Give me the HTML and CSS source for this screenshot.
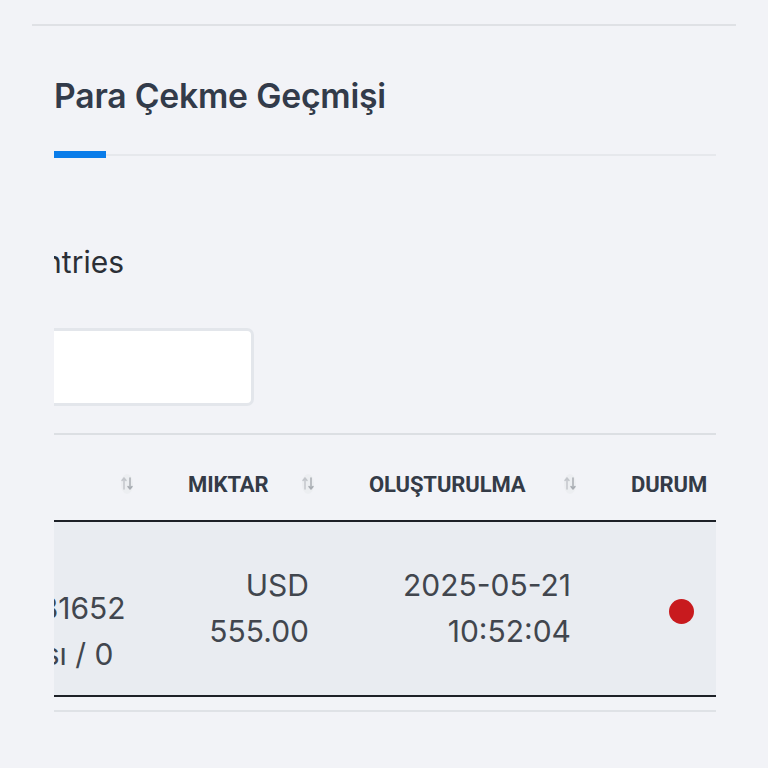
FILE: index.html
```html
<!DOCTYPE html>
<html lang="tr">
<head>
<meta charset="utf-8">
<title>Para Çekme Geçmişi</title>
<link rel="stylesheet" href="styles.css">
</head>
<body>
<div class="page">
  <div class="top-rule"></div>
  <section class="card">
    <h2 class="title">Para Çekme Geçmişi</h2>
    <div class="tabbar"><span class="tab-active"></span><span class="tab-line"></span></div>
    <div class="scroller">
      <div class="inner">
        <div class="length"><span>Show 10 entries</span></div>
        <div class="search"><input type="search" class="search-input" aria-label="Ara"></div>
        <div class="table-wrap">
          <table class="grid">
            <colgroup>
              <col class="c1"><col class="c2"><col class="c3"><col class="c4">
            </colgroup>
            <thead>
              <tr>
                <th><div class="th-in"><span>HESAP</span><svg class="sort" viewBox="0 0 16 22" width="16" height="22"><ellipse class="glow" cx="8" cy="11" rx="6" ry="10"/><path class="up" d="M5 16V5M3 7.5L5 5l2 2.5"/><path class="down" d="M11 5v11M9 13.5l2 2.5 2-2.5"/></svg></div></th>
                <th><div class="th-in"><span>MIKTAR</span><svg class="sort" viewBox="0 0 16 22" width="16" height="22"><ellipse class="glow" cx="8" cy="11" rx="6" ry="10"/><path class="up" d="M5 16V5M3 7.5L5 5l2 2.5"/><path class="down" d="M11 5v11M9 13.5l2 2.5 2-2.5"/></svg></div></th>
                <th><div class="th-in"><span>OLUŞTURULMA</span><svg class="sort" viewBox="0 0 16 22" width="16" height="22"><ellipse class="glow" cx="8" cy="11" rx="6" ry="10"/><path class="up" d="M5 16V5M3 7.5L5 5l2 2.5"/><path class="down" d="M11 5v11M9 13.5l2 2.5 2-2.5"/></svg></div></th>
                <th><div class="th-in"><span>DURUM</span></div></th>
              </tr>
            </thead>
            <tbody>
              <tr>
                <td class="left">Nakit<br>174031652<br>Kasası / 0</td>
                <td class="num">USD 555.00</td>
                <td class="num">2025-05-21 10:52:04</td>
                <td class="status"><span class="dot"></span></td>
              </tr>
            </tbody>
          </table>
        </div>
        <div class="info">Showing 1 to 1 of 1 entries</div>
      </div>
    </div>
  </section>
</div>
</body>
</html>
```

FILE: styles.css
```css
* { box-sizing: border-box; }

html, body {
  margin: 0;
  padding: 0;
  background: #f2f3f7;
  overflow: hidden;
}

body {
  font-family: Inter, "Noto Sans", sans-serif;
  color: #41464e;
}

.page {
  padding: 24px 32px 0 32px;
}

.top-rule {
  height: 2px;
  background: #dfe1e5;
}

.card {
  padding: 0 20px 0 22px;
}

.title {
  margin: 50px 0 0 0;
  font-size: 33.7px;
  line-height: 40px;
  font-weight: 600;
  color: #323b4a;
  letter-spacing: -0.2px;
}

.tabbar {
  margin-top: 35px;
  display: flex;
  align-items: center;
  height: 7px;
}

.tab-active {
  width: 52px;
  height: 7px;
  background: #0a7ce9;
}

.tab-line {
  flex: 1;
  height: 2px;
  background: #e6e8ec;
}

.scroller {
  overflow: hidden;
  width: 100%;
}

.inner {
  margin-left: -100px;
  width: 900px;
}

.length {
  margin-top: 84px;
  width: 170px;
  display: flex;
  justify-content: flex-end;
  white-space: nowrap;
  font-size: 30px;
  line-height: 40px;
  color: #2b2f36;
}

.search {
  margin-top: 46px;
  padding-left: 80px;
}

.search-input {
  display: block;
  width: 220px;
  height: 78px;
  background: #ffffff;
  border: 3px solid #e3e6eb;
  border-radius: 7px;
  outline: none;
}

.table-wrap {
  margin-top: 27px;
  width: 798px;
  border-top: 2px solid #dcdfe3;
  border-bottom: 2px solid #dfe2e6;
  padding-bottom: 13px;
}

.grid {
  width: 798px;
  table-layout: fixed;
  border-collapse: collapse;
}

.c1 { width: 214px; }
.c2 { width: 181px; }
.c3 { width: 262px; }
.c4 { width: 141px; }

.grid th {
  height: 86px;
  padding: 0;
  text-align: left;
  border-bottom: 2px solid #1d2127;
  font-family: Roboto, "Liberation Sans", sans-serif;
  font-size: 22px;
  font-weight: 700;
  letter-spacing: -0.1px;
  color: #343b47;
}

.th-in {
  display: flex;
  align-items: center;
  justify-content: space-between;
  padding: 13px 33px 0 20px;
}

.sort .glow {
  fill: #e9ebee;
  opacity: 0.7;
}

.sort .up,
.sort .down {
  fill: none;
  stroke-width: 1.5;
  stroke-linecap: round;
  stroke-linejoin: round;
}

.sort .up { stroke: #c3c6cb; }
.sort .down { stroke: #a9adb3; }

.grid td {
  background: #e9ecf1;
  padding: 17px 40px 18px 20px;
  font-size: 30px;
  line-height: 46px;
  vertical-align: middle;
  border-bottom: 2px solid #1d2127;
}

.grid td.left {
  text-align: left;
  white-space: nowrap;
}

.grid td.num {
  text-align: right;
}

.grid td.status {
  text-align: center;
  padding: 0;
}

.dot {
  display: inline-block;
  width: 25px;
  height: 25px;
  border-radius: 50%;
  background: #c81a1e;
  vertical-align: middle;
}

.info {
  margin-top: 54px;
  padding-left: 70px;
  font-size: 30px;
  line-height: 40px;
  color: #2b2f36;
  white-space: nowrap;
}
```
